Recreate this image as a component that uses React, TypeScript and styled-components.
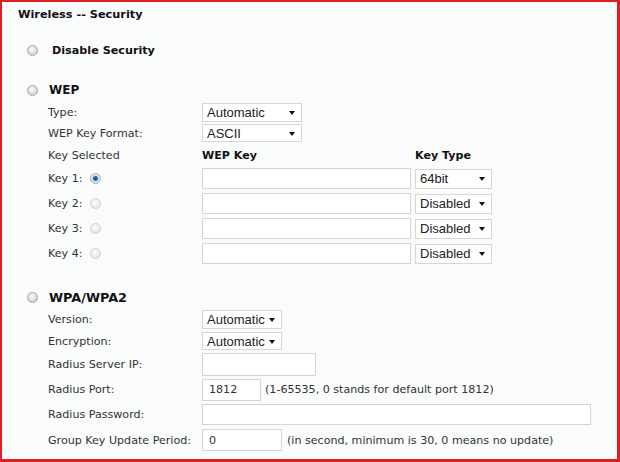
import React from "react";
import styled, { createGlobalStyle } from "styled-components";

const Global = createGlobalStyle`
  html, body { margin: 0; padding: 0; background: #fafbfb; }
  #root { width: 620px; height: 462px; }
`;

const Frame = styled.div`
  box-sizing: border-box;
  width: 620px;
  height: 462px;
  border-style: solid;
  border-color: #dd1f22;
  border-width: 2px 3px 3px 2px;
  background: #fafbfb;
  font-family: "DejaVu Sans", Verdana, sans-serif;
  font-size: 11.1px;
  color: #333;
  display: flex;
  flex-direction: column;
  overflow: hidden;
`;

const Title = styled.div`
  height: 24px;
  display: flex;
  align-items: center;
  padding-left: 16px;
  font-weight: bold;
  font-size: 11.3px;
  color: #111;
`;

const Header = styled.div<{ $mt: number; $pl: number; $size: number }>`
  margin-top: ${(p) => p.$mt}px;
  height: 24px;
  display: flex;
  align-items: center;
  padding-left: 25px;
  font-weight: bold;
  font-size: ${(p) => p.$size}px;
  color: #111;
  & > span:last-child {
    margin-left: ${(p) => p.$pl}px;
  }
`;

const Row = styled.div<{ $h: number }>`
  height: ${(p) => p.$h}px;
  display: flex;
  align-items: center;
  padding-left: 46px;
  white-space: nowrap;
`;

const Label = styled.div`
  width: 154px;
  flex: none;
  display: flex;
  align-items: center;
`;

const ColHead = styled.div<{ $w: number }>`
  width: ${(p) => p.$w}px;
  font-weight: bold;
  color: #111;
`;

const RadioDot = styled.span<{ $checked?: boolean; $faint?: boolean }>`
  box-sizing: border-box;
  display: inline-block;
  width: 11px;
  height: 11px;
  border-radius: 50%;
  border: 1px solid ${(p) => (p.$faint ? "#d2d2d2" : "#a9a9a9")};
  background: ${(p) =>
    p.$checked
      ? "radial-gradient(circle at 50% 50%, #1b4f8a 0, #2a6cb5 2px, #cfd8e2 3px, #f4f4f4 5px)"
      : p.$faint
      ? "radial-gradient(circle at 45% 40%, #ffffff 0, #f0f0f0 3px, #e0e0e0 6px)"
      : "radial-gradient(circle at 45% 40%, #ffffff 0, #e6e6e6 3px, #c8c8c8 6px)"};
  flex: none;
`;

const KeyRadio = styled(RadioDot)`
  margin-left: 8px;
`;

const FakeSelect = styled.div<{ $w: number; $h: number; $mr?: number }>`
  box-sizing: border-box;
  width: ${(p) => p.$w}px;
  height: ${(p) => p.$h}px;
  margin-right: ${(p) => p.$mr ?? 0}px;
  border: 1px solid #d6d6d6;
  background: #fff;
  display: flex;
  align-items: center;
  justify-content: space-between;
  padding: 0 6px 0 4px;
  font-family: "Liberation Sans", Arial, sans-serif;
  font-size: 13px;
  color: #222;
  flex: none;
`;

const Caret = styled.span`
  width: 0;
  height: 0;
  border-left: 3.5px solid transparent;
  border-right: 3.5px solid transparent;
  border-top: 4px solid #111;
  margin-top: 1px;
`;

const TextBox = styled.div<{ $w: number; $h: number; $mr?: number }>`
  box-sizing: border-box;
  width: ${(p) => p.$w}px;
  height: ${(p) => p.$h}px;
  margin-right: ${(p) => p.$mr ?? 0}px;
  border: 1px solid #d4d4d4;
  background: #fff;
  display: flex;
  align-items: center;
  padding-left: 6px;
  color: #333;
  flex: none;
`;

const Note = styled.span`
  color: #333;
`;

function Select({ value, w, h = 19, mr }: { value: string; w: number; h?: number; mr?: number }) {
  return (
    <FakeSelect $w={w} $h={h} $mr={mr}>
      <span>{value}</span>
      <Caret />
    </FakeSelect>
  );
}

const keys = [
  { n: 1, type: "64bit", checked: true },
  { n: 2, type: "Disabled", checked: false },
  { n: 3, type: "Disabled", checked: false },
  { n: 4, type: "Disabled", checked: false },
];

export default function App() {
  return (
    <>
      <Global />
      <Frame>
        <Title>Wireless -- Security</Title>

        <Header $mt={12} $pl={14} $size={11.2}>
          <RadioDot />
          <span>Disable Security</span>
        </Header>

        <Header $mt={16} $pl={11} $size={12}>
          <RadioDot />
          <span>WEP</span>
        </Header>
        <Row $h={20}>
          <Label>Type:</Label>
          <Select value="Automatic" w={100} />
        </Row>
        <Row $h={22}>
          <Label>WEP Key Format:</Label>
          <Select value="ASCII" w={100} h={18} />
        </Row>
        <Row $h={22}>
          <Label>Key Selected</Label>
          <ColHead $w={213}>WEP Key</ColHead>
          <ColHead $w={80}>Key Type</ColHead>
        </Row>
        {keys.map((k) => (
          <Row $h={25} key={k.n}>
            <Label>
              Key {k.n}:
              <KeyRadio $checked={k.checked} $faint={!k.checked} />
            </Label>
            <TextBox $w={209} $h={21} $mr={4} />
            <Select value={k.type} w={77} h={20} />
          </Row>
        ))}

        <Header $mt={19} $pl={11} $size={12.8}>
          <RadioDot />
          <span>WPA/WPA2</span>
        </Header>
        <Row $h={21}>
          <Label>Version:</Label>
          <Select value="Automatic" w={80} />
        </Row>
        <Row $h={22}>
          <Label>Encryption:</Label>
          <Select value="Automatic" w={80} h={18} />
        </Row>
        <Row $h={25}>
          <Label>Radius Server IP:</Label>
          <TextBox $w={114} $h={23} />
        </Row>
        <Row $h={25}>
          <Label>Radius Port:</Label>
          <TextBox $w={59} $h={22} $mr={4}>1812</TextBox>
          <Note>(1-65535, 0 stands for default port 1812)</Note>
        </Row>
        <Row $h={25}>
          <Label>Radius Password:</Label>
          <TextBox $w={389} $h={21} />
        </Row>
        <Row $h={26}>
          <Label>Group Key Update Period:</Label>
          <TextBox $w={80} $h={22} $mr={5}>0</TextBox>
          <Note>(in second, minimum is 30, 0 means no update)</Note>
        </Row>
      </Frame>
    </>
  );
}
